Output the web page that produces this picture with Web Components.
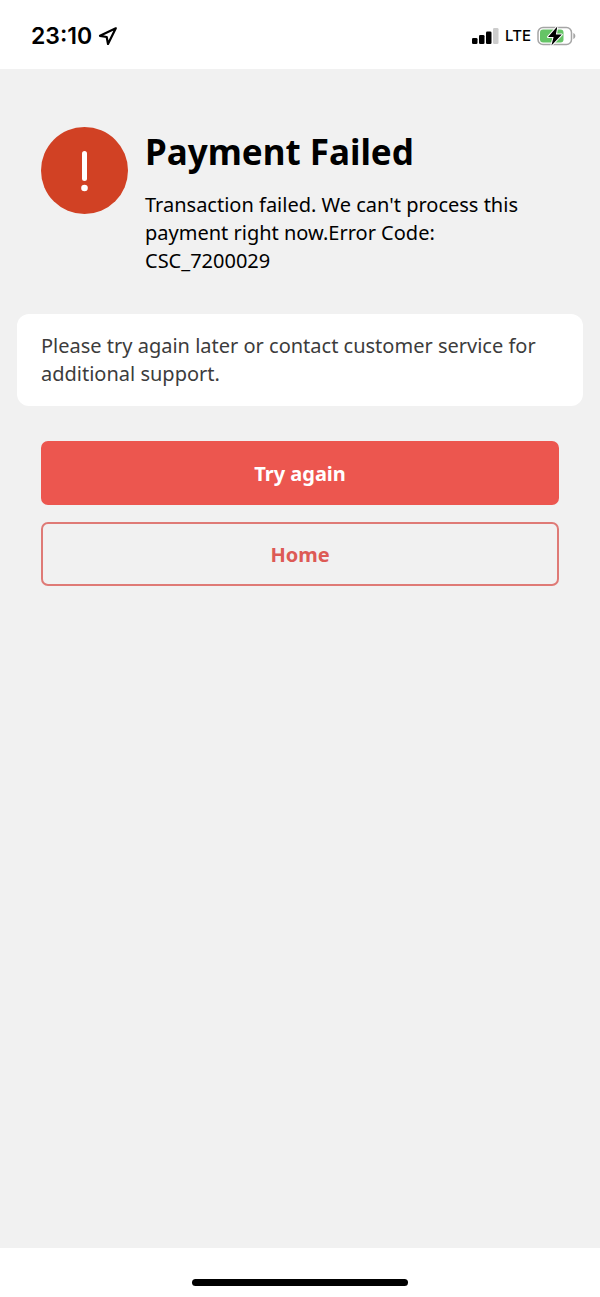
<!DOCTYPE html>
<html lang="en">
<head>
<meta charset="utf-8">
<meta name="viewport" content="width=device-width, initial-scale=1">
<title>Payment Failed</title>
<style>
  html { height: 100%; }
  body { margin: 0; min-height: 100%; display: grid; background: #fff; font-family: "Noto Sans", "Open Sans", sans-serif; }
</style>
</head>
<body>
<payment-screen></payment-screen>

<script>
const define = (name, html) => {
  const template = document.createElement("template");
  template.innerHTML = html;
  customElements.define(name, class extends HTMLElement {
    constructor() {
      super();
      this.attachShadow({ mode: "open" }).append(template.content.cloneNode(true));
    }
  });
};

define("status-bar", `
  <style>
    :host { display: flex; align-items: center; justify-content: space-between; box-sizing: border-box; height: 69px; padding: 3px 24px 0 31px; background: #fff; color: #000; font-family: Inter, sans-serif; }
    .group { display: flex; align-items: center; gap: 6px; }
    .time { font-size: 23px; line-height: 28px; font-weight: 600; }
    .network { font-size: 15px; line-height: 28px; font-weight: 500; }
    svg { display: block; }
  </style>
  <div class="group">
    <span class="time">23:10</span>
    <svg width="20" height="20" viewBox="0 0 20 20" aria-label="Location in use" role="img">
      <path d="M17.8 2.3 2 9.8 8.700 11 10 18Z" fill="none" stroke="#000" stroke-width="2.2" stroke-linejoin="round"/>
    </svg>
  </div>
  <div class="group">
    <svg width="27" height="18" viewBox="0 0 27 18" aria-label="Signal, three of four bars" role="img">
      <rect x="0" y="11" width="5.5" height="6" rx="1.3"/>
      <rect x="7" y="8" width="5.5" height="9" rx="1.3"/>
      <rect x="14" y="4.5" width="5.5" height="12.5" rx="1.3"/>
      <rect x="21" y="1" width="5.5" height="16" rx="1.3" fill="#ccc"/>
    </svg>
    <span class="network">LTE</span>
    <svg width="39" height="20" viewBox="0 0 39 20" aria-label="Battery charging" role="img">
      <rect x="1" y="1.5" width="33.5" height="17" rx="5" fill="#fff" stroke="#a5a5a5" stroke-width="1.5"/>
      <rect x="3" y="3.5" width="23.5" height="13" rx="3" fill="#65c466"/>
      <path d="M36.3 7v6c2.7-1 2.7-5 0-6Z" fill="#a5a5a5"/>
      <path d="M20.3 .6 11 11h5.6L14.4 19.4 24.8 8.600H18.900Z" fill="#000" stroke="#fff" stroke-width="2" stroke-linejoin="round" paint-order="stroke"/>
    </svg>
  </div>
`);

define("alert-icon", `
  <style>
    :host { display: block; flex: none; width: 87px; height: 87px; }
    svg { display: block; width: 100%; height: 100%; }
  </style>
  <svg viewBox="0 0 87 87" aria-label="Error" role="img">
    <circle cx="43.5" cy="43.5" r="43.5" fill="#d14124"/>
    <rect x="41" y="24" width="5" height="30" rx="2.5" fill="#fff"/>
    <circle cx="43.5" cy="61" r="3.3" fill="#fff"/>
  </svg>
`);

define("result-header", `
  <style>
    :host { display: flex; gap: 17px; padding: 0 24px; color: #000; }
    .copy { flex: 1; }
    h1 { margin: 0; font-size: 35px; line-height: 49px; font-weight: 700; }
    p { margin: 15px 0 0; font-size: 20px; line-height: 28px; }
  </style>
  <alert-icon></alert-icon>
  <div class="copy">
    <h1><slot name="title"></slot></h1>
    <p><slot></slot></p>
  </div>
`);

define("info-card", `
  <style>
    :host { display: block; padding: 18px 24px; border-radius: 12px; background: #fff; color: #3c3c3c; }
    p { margin: 0; font-size: 20px; line-height: 28px; }
  </style>
  <p><slot></slot></p>
`);

define("action-button", `
  <style>
    :host { display: grid; --fill: transparent; --ink: #dd5a55; --edge: #df7a76; }
    :host([primary]) { --fill: #ec564f; --ink: #fff; --edge: #ec564f; }
    button { box-sizing: border-box; width: 100%; min-height: 64px; margin: 0; padding: 2px 16px 0; border: 2px solid var(--edge); border-radius: 7px; background: var(--fill); color: var(--ink); font-family: inherit; font-size: 20px; line-height: 28px; font-weight: 700; cursor: pointer; }
  </style>
  <button type="button"><slot></slot></button>
`);

define("home-indicator", `
  <style>
    :host { display: flex; justify-content: center; align-items: flex-end; box-sizing: border-box; height: 49px; padding-bottom: 11px; background: #fff; }
    span { width: 36%; height: 7px; border-radius: 4px; background: #000; }
  </style>
  <span></span>
`);

define("payment-screen", `
  <style>
    :host { display: flex; flex-direction: column; min-height: 100%; }
    main { flex: 1; padding: 58px 17px 32px; background: #f1f1f1; }
    info-card { margin-top: 39px; }
    .actions { display: grid; gap: 17px; margin-top: 35px; padding: 0 24px; }
  </style>
  <status-bar></status-bar>
  <main>
    <result-header>
      <span slot="title">Payment Failed</span>
      Transaction failed. We can't process this payment right now.Error Code: CSC_7200029
    </result-header>
    <info-card>Please try again later or contact customer service for additional support.</info-card>
    <div class="actions">
      <action-button primary>Try again</action-button>
      <action-button>Home</action-button>
    </div>
  </main>
  <home-indicator></home-indicator>
`);
</script>
</body>
</html>
